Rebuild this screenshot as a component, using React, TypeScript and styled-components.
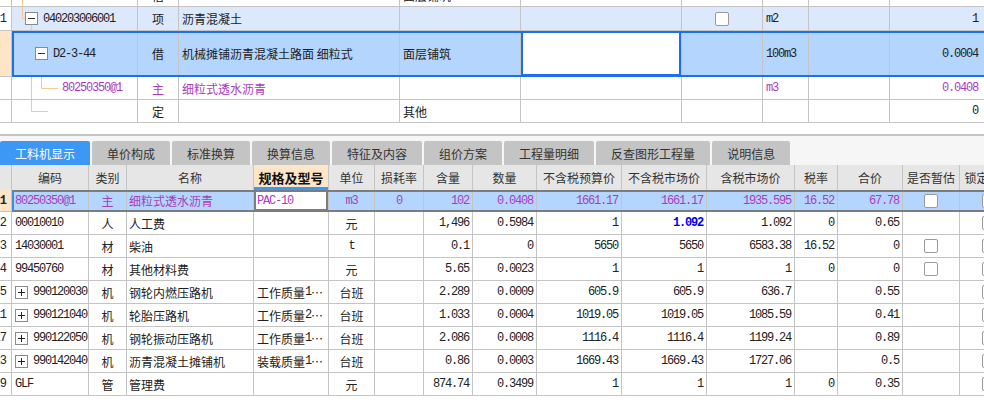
import React from 'react';
import styled, { createGlobalStyle, css } from 'styled-components';

const GRID = '#c4c4c4';
const PURPLE = '#a83cbf';
const TREE = '#f6c88d';
const CJK = '"Noto Sans CJK SC", "Noto Sans", sans-serif';
const MONO = '"Liberation Mono", "Noto Sans CJK SC", monospace';

const Global = createGlobalStyle`
  html, body { margin: 0; padding: 0; background: #fff; }
  body { font-family: ${CJK}; font-size: 12px; color: #222; }
`;

const Page = styled.div`
  width: 984px;
  height: 416px;
  overflow: hidden;
  background: #fff;
  display: flex;
  flex-direction: column;
`;

const TopGrid = styled.div`
  display: flex;
  flex-direction: column;
  margin-top: -16px;
  flex: none;
`;

const Row = styled.div<{ $h: number }>`
  display: flex;
  flex: none;
  height: ${(p) => p.$h}px;
`;

const Gutter = styled.div<{ $bg?: string; $bold?: boolean; $head?: boolean }>`
  width: 12px;
  flex: none;
  box-sizing: border-box;
  border-right: 1px solid ${GRID};
  border-bottom: ${(p) => (p.$head ? 'none' : `1px solid ${GRID}`)};
  background: ${(p) => p.$bg || '#fff'};
  display: flex;
  align-items: center;
  justify-content: flex-end;
  padding-right: 5px;
  overflow: hidden;
  font-family: ${MONO};
  font-size: 12px;
  letter-spacing: -1px;
  font-weight: ${(p) => (p.$bold ? 700 : 400)};
  white-space: nowrap;
`;

type FrameKind = 'blue' | 'gray';

const Cells = styled.div<{ $cols: string; $bg?: string; $frame?: FrameKind }>`
  display: grid;
  grid-template-columns: ${(p) => p.$cols};
  flex: none;
  position: relative;
  background: ${(p) => p.$bg || 'transparent'};
  ${(p) =>
    p.$frame === 'blue' &&
    css`
      &::after {
        content: '';
        position: absolute;
        inset: 0;
        pointer-events: none;
        border: 2px solid #1a6ff2;
      }
    `}
  ${(p) =>
    p.$frame === 'gray' &&
    css`
      &::after {
        content: '';
        position: absolute;
        inset: 0;
        pointer-events: none;
        border-top: 2px solid #7c7c7c;
        border-bottom: 2px solid #7c7c7c;
        border-left: 2px solid #3b8cf0;
      }
    `}
`;

type Align = 'left' | 'center' | 'right';

const Cell = styled.div<{
  $align?: Align;
  $mono?: boolean;
  $purple?: boolean;
  $blue?: boolean;
  $pr?: number;
  $pl?: number;
  $edit?: FrameKind;
  $gap?: number;
}>`
  box-sizing: border-box;
  min-width: 0;
  border-right: 1px solid ${GRID};
  border-bottom: 1px solid ${GRID};
  display: flex;
  align-items: center;
  gap: ${(p) => p.$gap ?? 0}px;
  justify-content: ${(p) =>
    p.$align === 'right' ? 'flex-end' : p.$align === 'center' ? 'center' : 'flex-start'};
  padding: 0 ${(p) => p.$pr ?? 3}px 0 ${(p) => p.$pl ?? 3}px;
  overflow: hidden;
  white-space: nowrap;
  color: ${(p) => (p.$blue ? '#0000ee' : p.$purple ? PURPLE : '#222')};
  font-weight: ${(p) => (p.$blue ? 700 : 400)};
  font-family: ${(p) => (p.$mono ? MONO : CJK)};
  font-size: 12px;
  letter-spacing: ${(p) => (p.$mono ? '-1.2px' : '0')};
  ${(p) =>
    p.$edit &&
    css`
      background: #fff;
      box-shadow: inset 0 0 0 2px ${p.$edit === 'blue' ? '#1a6ff2' : '#7c7c7c'};
    `}
`;

const Mono = styled.span`
  font-family: ${MONO};
  font-size: 12px;
  letter-spacing: -1.2px;
`;

const Check = styled.span`
  width: 14px;
  height: 14px;
  box-sizing: border-box;
  border: 1px solid #9a9a9a;
  border-radius: 2px;
  background: #fff;
  flex: none;
`;

const TreeSvg = styled.svg`
  flex: none;
  display: block;
  overflow: visible;
`;

type Line = [number, number, number, number];

function TreeGuide({ w, h, lines, boxes = [] }: { w: number; h: number; lines: Line[]; boxes?: [number, number][] }) {
  return (
    <TreeSvg width={w} height={h} viewBox={`0 0 ${w} ${h}`}>
      {lines.map(([x1, y1, x2, y2], i) => (
        <line key={i} x1={x1} y1={y1} x2={x2} y2={y2} stroke={TREE} strokeWidth={1} />
      ))}
      {boxes.map(([x, y], i) => (
        <g key={'b' + i}>
          <rect x={x + 0.5} y={y + 0.5} width={12} height={12} fill="#fff" stroke="#8a8a8a" />
          <line x1={x + 3} y1={y + 6.5} x2={x + 10} y2={y + 6.5} stroke="#333" />
        </g>
      ))}
    </TreeSvg>
  );
}

function PlusBox() {
  return (
    <TreeSvg width={13} height={13} viewBox="0 0 13 13">
      <rect x={0.5} y={0.5} width={12} height={12} fill="#fff" stroke="#8a8a8a" />
      <line x1={3} y1={6.5} x2={10} y2={6.5} stroke="#222" />
      <line x1={6.5} y1={3} x2={6.5} y2={10} stroke="#222" />
    </TreeSvg>
  );
}

const Spacer = styled.div`
  height: 11px;
  flex: none;
  background: #fff;
`;

const Divider = styled.div`
  height: 2px;
  flex: none;
  background: #c4c4c4;
`;

const TabBar = styled.div`
  display: flex;
  gap: 2px;
  padding-top: 5px;
  background: #f6f6f6;
  flex: none;
`;

const Tab = styled.div<{ $active?: boolean }>`
  height: 24px;
  padding: 0 15px;
  display: flex;
  align-items: center;
  justify-content: center;
  border-radius: 2px 2px 0 0;
  background: ${(p) => (p.$active ? '#3d97f5' : '#c4c4c4')};
  color: ${(p) => (p.$active ? '#fff' : '#333')};
  font-size: 12px;
  white-space: nowrap;
`;

const HeadCell = styled.div<{ $active?: boolean }>`
  box-sizing: border-box;
  min-width: 0;
  border-right: 1px solid ${GRID};
  display: flex;
  align-items: center;
  justify-content: center;
  overflow: hidden;
  white-space: nowrap;
  font-size: ${(p) => (p.$active ? '13px' : '12px')};
  font-weight: ${(p) => (p.$active ? 700 : 400)};
  color: ${(p) => (p.$active ? '#111' : '#333')};
  background: ${(p) => (p.$active ? '#fde6c8' : '#e6e6e6')};
  box-shadow: ${(p) => (p.$active ? 'inset 0 -3px 0 #3d97f5' : 'none')};
`;

const topCols = '126px 41px 221px 121px 161px 81px 46px 81px 100px';
const lowCols = '77px 38px 127px 75px 46px 49px 49px 64px 85px 85px 88px 43px 65px 57px 58px';

const isAscii = (s: string) => /^[\x00-\x7f]*$/.test(s);

const tabs = ['工料机显示', '单价构成', '标准换算', '换算信息', '特征及内容', '组价方案', '工程量明细', '反查图形工程量', '说明信息'];
const heads = ['编码', '类别', '名称', '规格及型号', '单位', '损耗率', '含量', '数量', '不含税预算价', '不含税市场价', '含税市场价', '税率', '合价', '是否暂估', '锁定含量'];

interface LowData {
  n: string;
  code: string;
  plus?: boolean;
  cat: string;
  name: string;
  spec?: React.ReactNode;
  unit: string;
  loss?: string;
  vals: string[];
  est?: boolean;
  lock?: boolean;
  blueIdx?: number;
}

const lowRows: LowData[] = [
  { n: '1', code: '80250350@1', cat: '主', name: '细粒式透水沥青', spec: 'PAC-10', unit: 'm3', loss: '0', vals: ['102', '0.0408', '1661.17', '1661.17', '1935.595', '16.52', '67.78'], est: true, lock: true },
  { n: '2', code: '00010010', cat: '人', name: '人工费', unit: '元', vals: ['1,496', '0.5984', '1', '1.092', '1.092', '0', '0.65'], lock: true, blueIdx: 3 },
  { n: '3', code: '14030001', cat: '材', name: '柴油', unit: 't', vals: ['0.1', '0', '5650', '5650', '6583.38', '16.52', '0'], est: true, lock: true },
  { n: '4', code: '99450760', cat: '材', name: '其他材料费', unit: '元', vals: ['5.65', '0.0023', '1', '1', '1', '0', '0'], est: true, lock: true },
  { n: '5', code: '990120030', plus: true, cat: '机', name: '钢轮内燃压路机', spec: <>工作质量<Mono>1</Mono>…</>, unit: '台班', vals: ['2.289', '0.0009', '605.9', '605.9', '636.7', '', '0.55'], lock: true },
  { n: '11', code: '990121040', plus: true, cat: '机', name: '轮胎压路机', spec: <>工作质量<Mono>2</Mono>…</>, unit: '台班', vals: ['1.033', '0.0004', '1019.05', '1019.05', '1085.59', '', '0.41'], lock: true },
  { n: '17', code: '990122050', plus: true, cat: '机', name: '钢轮振动压路机', spec: <>工作质量<Mono>1</Mono>…</>, unit: '台班', vals: ['2.086', '0.0008', '1116.4', '1116.4', '1199.24', '', '0.89'], lock: true },
  { n: '23', code: '990142040', plus: true, cat: '机', name: '沥青混凝土摊铺机', spec: <>装载质量<Mono>1</Mono>…</>, unit: '台班', vals: ['0.86', '0.0003', '1669.43', '1669.43', '1727.06', '', '0.5'], lock: true },
  { n: '29', code: 'GLF', cat: '管', name: '管理费', unit: '元', vals: ['874.74', '0.3499', '1', '1', '1', '0', '0.35'], lock: true },
];

function LowRow({ d, sel }: { d: LowData; sel?: boolean }) {
  const purple = !!sel;
  return (
    <Row $h={sel ? 22 : 23}>
      <Gutter $bg={sel ? '#fde5c6' : '#fff'} $bold={sel}>{d.n}</Gutter>
      <Cells $cols={lowCols} $bg={sel ? '#b4d5fd' : '#fff'} $frame={sel ? 'gray' : undefined}>
        <Cell $mono $purple={purple} $gap={5}>
          {d.plus && <PlusBox />}
          {d.code}
        </Cell>
        <Cell $align="center" $purple={purple}>{d.cat}</Cell>
        <Cell $pl={2} $purple={purple}>{d.name}</Cell>
        <Cell $mono={typeof d.spec === 'string'} $purple={purple} $edit={sel ? 'gray' : undefined}>
          {d.spec}
        </Cell>
        <Cell $align="center" $mono={isAscii(d.unit)} $purple={purple}>{d.unit}</Cell>
        <Cell $align="center" $mono $purple={purple}>{d.loss}</Cell>
        {d.vals.map((v, i) => (
          <Cell key={i} $align="right" $mono $purple={purple} $blue={d.blueIdx === i}>
            {v}
          </Cell>
        ))}
        <Cell $align="center">{d.est && <Check />}</Cell>
        <Cell $align="center">{d.lock && <Check />}</Cell>
      </Cells>
    </Row>
  );
}

export default function App() {
  return (
    <Page>
      <Global />
      <TopGrid>
        <Row $h={23}>
          <Gutter />
          <Cells $cols={topCols}>
            <Cell $pl={0}>
              <TreeGuide w={20} h={22} lines={[[10.5, 0, 10.5, 23]]} />
            </Cell>
            <Cell $align="center">借</Cell>
            <Cell />
            <Cell>面层铺筑</Cell>
            <Cell />
            <Cell />
            <Cell />
            <Cell />
            <Cell />
          </Cells>
        </Row>
        <Row $h={24}>
          <Gutter>1</Gutter>
          <Cells $cols={topCols} $bg="#dce8fb">
            <Cell $pl={0} $mono>
              <TreeGuide
                w={31}
                h={23}
                lines={[
                  [10.5, 0, 10.5, 11.5],
                  [10.5, 11.5, 13, 11.5],
                  [19.5, 18, 19.5, 24],
                ]}
                boxes={[[13, 5]]}
              />
              040203006001
            </Cell>
            <Cell $align="center">项</Cell>
            <Cell>沥青混凝土</Cell>
            <Cell />
            <Cell />
            <Cell $align="center">
              <Check />
            </Cell>
            <Cell $mono>m2</Cell>
            <Cell />
            <Cell $align="right" $mono $pr={11}>1</Cell>
          </Cells>
        </Row>
        <Row $h={46}>
          <Gutter $bg="#fde5c6" />
          <Cells $cols={topCols} $bg="#b4d5fd" $frame="blue">
            <Cell $pl={0} $mono>
              <TreeGuide
                w={41}
                h={45}
                lines={[
                  [19.5, 0, 19.5, 46],
                  [29.5, 29, 29.5, 46],
                ]}
                boxes={[[23, 16]]}
              />
              D2-3-44
            </Cell>
            <Cell $align="center">借</Cell>
            <Cell>机械摊铺沥青混凝土路面 细粒式</Cell>
            <Cell>面层铺筑</Cell>
            <Cell $edit="blue" />
            <Cell />
            <Cell $mono>100m3</Cell>
            <Cell />
            <Cell $align="right" $mono $pr={11}>0.0004</Cell>
          </Cells>
        </Row>
        <Row $h={23}>
          <Gutter />
          <Cells $cols={topCols}>
            <Cell $pl={0} $mono $purple>
              <TreeGuide
                w={50}
                h={22}
                lines={[
                  [19.5, 0, 19.5, 23],
                  [29.5, 0, 29.5, 11.5],
                  [29.5, 11.5, 46, 11.5],
                ]}
              />
              80250350@1
            </Cell>
            <Cell $align="center" $purple>主</Cell>
            <Cell $purple>细粒式透水沥青</Cell>
            <Cell />
            <Cell />
            <Cell />
            <Cell $mono $purple>m3</Cell>
            <Cell />
            <Cell $align="right" $mono $purple $pr={11}>0.0408</Cell>
          </Cells>
        </Row>
        <Row $h={23}>
          <Gutter />
          <Cells $cols={topCols}>
            <Cell $pl={0}>
              <TreeGuide
                w={50}
                h={22}
                lines={[
                  [19.5, 0, 19.5, 11.5],
                  [19.5, 11.5, 36, 11.5],
                ]}
              />
            </Cell>
            <Cell $align="center">定</Cell>
            <Cell />
            <Cell>其他</Cell>
            <Cell />
            <Cell />
            <Cell />
            <Cell />
            <Cell $align="right" $mono $pr={11}>0</Cell>
          </Cells>
        </Row>
      </TopGrid>
      <Spacer />
      <Divider />
      <TabBar>
        {tabs.map((t, i) => (
          <Tab key={t} $active={i === 0}>
            {t}
          </Tab>
        ))}
      </TabBar>
      <Row $h={25}>
        <Gutter $bg="#e6e6e6" $head />
        <Cells $cols={lowCols}>
          {heads.map((h) => (
            <HeadCell key={h} $active={h === '规格及型号'}>
              {h}
            </HeadCell>
          ))}
        </Cells>
      </Row>
      {lowRows.map((d, i) => (
        <LowRow key={d.n} d={d} sel={i === 0} />
      ))}
    </Page>
  );
}
